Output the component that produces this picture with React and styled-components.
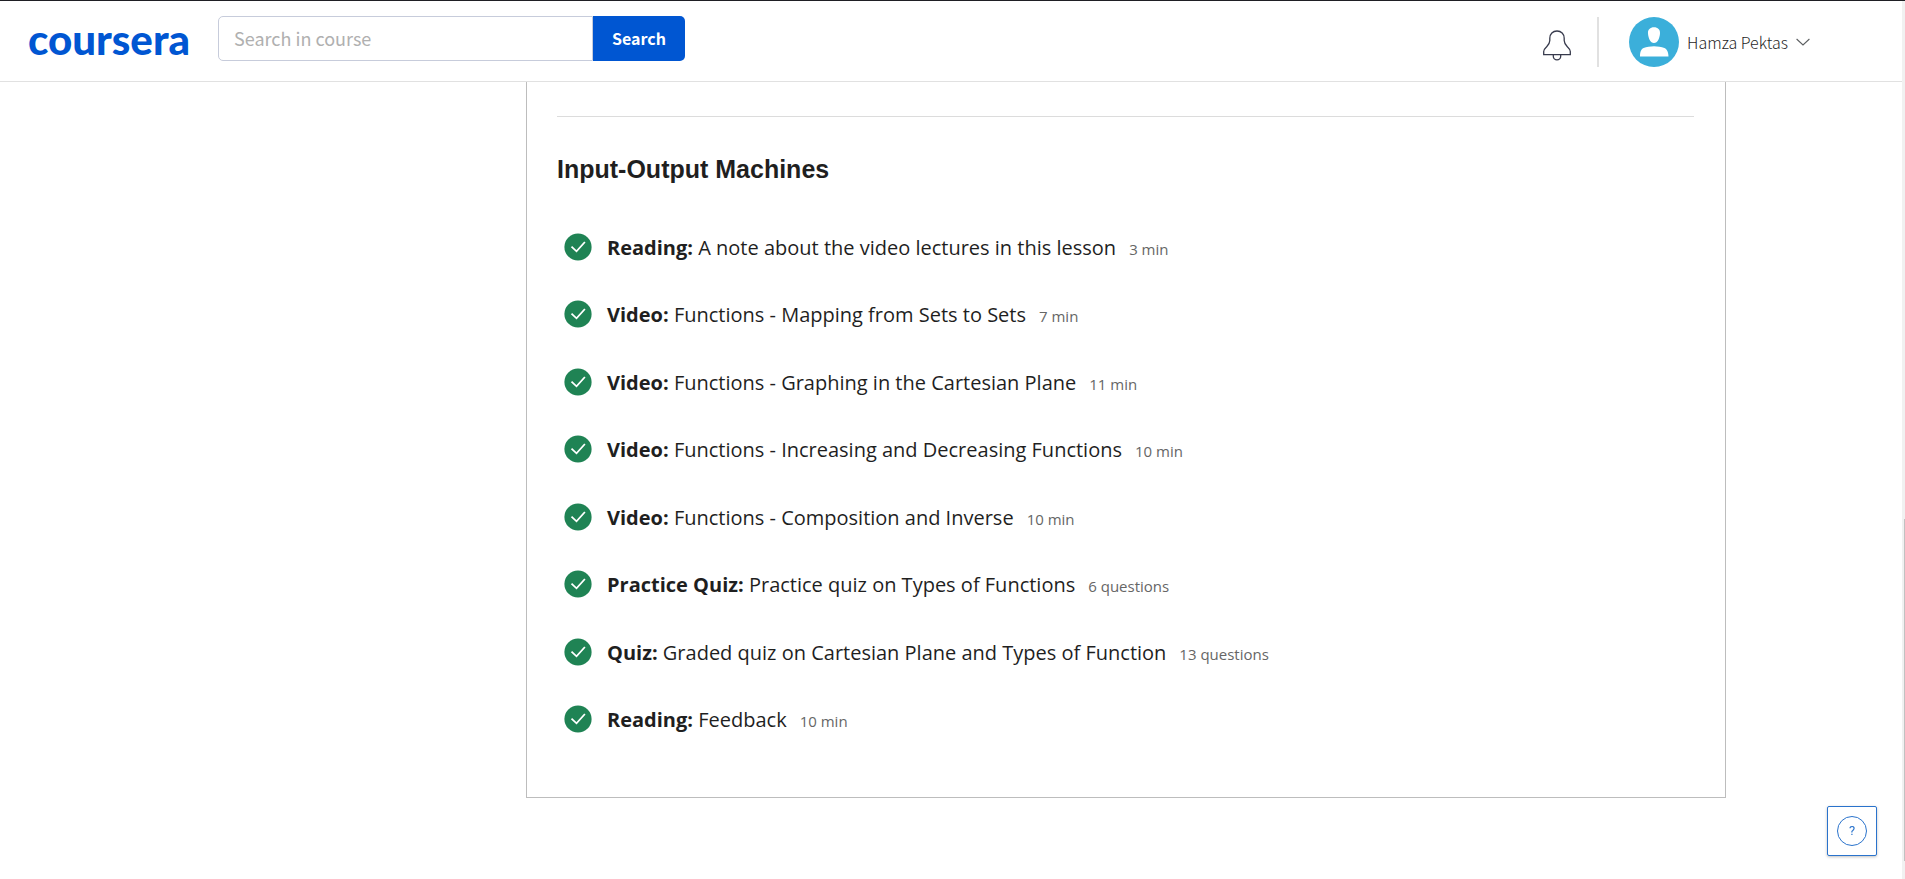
import React from "react";
import styled, { createGlobalStyle } from "styled-components";

const GlobalStyle = createGlobalStyle`
  *, *::before, *::after { box-sizing: border-box; }
  body {
    margin: 0;
    background: #fff;
    color: #1f1f1f;
    font-family: "Open Sans", "Noto Sans", sans-serif;
  }
`;

const uiFont = `"Noto Sans CJK SC", "Open Sans", sans-serif`;

const Header = styled.header`
  display: flex;
  align-items: flex-start;
  height: 82px;
  padding: 0 95px 0 28px;
  border-top: 1px solid #1f1f24;
  border-bottom: 1px solid #e1e1e1;
`;

const Logo = styled.a`
  width: 190px;
  margin-top: 14px;
  color: #0056d2;
  font: 900 42px/48px Lato, sans-serif;
  text-decoration: none;
`;

const SearchForm = styled.form`
  display: flex;
  height: 45px;
  margin-top: 15px;
`;

const SearchInput = styled.input`
  width: 375px;
  padding: 0 15px 2px;
  border: 1px solid #c7ccdb;
  border-radius: 5px 0 0 5px;
  font: 400 18px/26px ${uiFont};
  color: #1f1f1f;
  outline: none;
  &::placeholder { color: #b0b0b0; opacity: 1; }
`;

const SearchButton = styled.button`
  width: 92px;
  padding: 0 0 2px;
  border: 0;
  border-radius: 0 5px 5px 0;
  background: #0056d2;
  color: #fff;
  font: 700 16px/24px ${uiFont};
  cursor: pointer;
`;

const Account = styled.div`
  display: flex;
  align-items: center;
  height: 50px;
  margin: 16px 0 0 auto;
`;

const BellButton = styled.button`
  display: flex;
  padding: 6px 26px 0 0;
  border: 0;
  background: none;
  cursor: pointer;
`;

const ProfileButton = styled.button`
  display: flex;
  align-items: center;
  height: 50px;
  padding: 0 0 0 30px;
  border: 0;
  border-left: 2px solid #e1e1e1;
  background: none;
  color: #1f1f1f;
  font: 300 16px/24px ${uiFont};
  cursor: pointer;
`;

const ProfileName = styled.span`
  margin: 0 8px;
`;

const Main = styled.main`
  padding: 0 179px 80px 526px;
`;

const Card = styled.section`
  padding: 34px 31px 42px 30px;
  border: 1px solid #bdbdbd;
  border-top: 0;
`;

const Divider = styled.hr`
  height: 1px;
  margin: 0 0 37px;
  border: 0;
  background: #dcdcdc;
`;

const Title = styled.h2`
  margin: 0 0 31px;
  font: 700 25px/30px "Liberation Sans", Arial, sans-serif;
`;

const Lessons = styled.ul`
  display: grid;
  grid-auto-rows: 67px 68px;
  margin: 0;
  padding: 0;
  list-style: none;
`;

const LessonLink = styled.a`
  display: flex;
  align-items: center;
  height: 64px;
  padding-left: 7px;
  color: inherit;
  text-decoration: none;
`;

const LessonText = styled.span`
  margin: 2px 13px 0 15px;
  font-size: 20px;
  line-height: 30px;
`;

const Meta = styled.span`
  margin-top: 3px;
  color: #666;
  font-size: 15px;
  line-height: 24px;
`;

const HelpButton = styled.button`
  position: fixed;
  right: 28px;
  bottom: 23px;
  display: grid;
  place-items: center;
  width: 50px;
  height: 50px;
  padding: 0;
  border: 1px solid #2a73cc;
  border-radius: 2px;
  background: #fff;
  box-shadow: 0 1px 3px rgba(0, 0, 0, 0.25);
  cursor: pointer;
`;

const HelpMark = styled.span`
  width: 30px;
  height: 30px;
  border: 1px solid #2a73cc;
  border-radius: 50%;
  color: #2a73cc;
  font: 400 13px/28px Roboto, sans-serif;
  text-align: center;
`;

const ScrollTrack = styled.div`
  position: fixed;
  top: 1px;
  right: 0;
  bottom: 0;
  width: 3px;
  background: #f1f1f1;
`;

const ScrollThumb = styled.div`
  position: absolute;
  top: 59%;
  right: 0;
  width: 1px;
  height: 39%;
  background: #c1c1c1;
`;

const lessons = [
  ["Reading", "A note about the video lectures in this lesson", "3 min"],
  ["Video", "Functions - Mapping from Sets to Sets", "7 min"],
  ["Video", "Functions - Graphing in the Cartesian Plane", "11 min"],
  ["Video", "Functions - Increasing and Decreasing Functions", "10 min"],
  ["Video", "Functions - Composition and Inverse", "10 min"],
  ["Practice Quiz", "Practice quiz on Types of Functions", "6 questions"],
  ["Quiz", "Graded quiz on Cartesian Plane and Types of Function", "13 questions"],
  ["Reading", "Feedback", "10 min"],
];

const BellIcon = () => (
  <svg width="28" height="31" viewBox="0 0 28 31" fill="none" stroke="#373a4c" strokeWidth="1.3" aria-hidden="true">
    <path d="M.7 24.7v-3.2c0-2 1.1-2.900 2.800-4.500C5.800 14.800 6.800 13.400 6.800 10.600V8.200C6.800 4 9.800 1 14 1s7.200 3 7.200 7.200v2.400c0 2.800 1 4.200 3.300 6.400 1.700 1.600 2.800 2.500 2.800 4.500v3.200z" />
    <path d="M10.300 25v1.200a3.700 3.700 0 0 0 7.400 0V25" />
  </svg>
);

const Avatar = () => (
  <svg width="50" height="50" viewBox="0 0 50 50" aria-hidden="true">
    <circle cx="25" cy="25" r="25" fill="#3bafda" />
    <path fill="#fff" d="M25 10.200c3.800 0 6.300 2.300 6 6.200-.3 4.300-2.300 9.600-6 9.600s-5.700-5.300-6-9.600c-.3-3.900 2.200-6.200 6-6.200zM11 39.600c0-3.800.8-7.400 3.600-8.500 3-1.200 6.600-1.900 10.400-1.900s7.400.7 10.400 1.900c2.800 1.100 4.100 4.700 4.100 8.500z" />
  </svg>
);

const ChevronIcon = () => (
  <svg width="14" height="8" viewBox="0 0 14 8" fill="none" stroke="#5c5f61" strokeWidth="1.1" aria-hidden="true">
    <path d="M.6 1 7 7l6.400-6" />
  </svg>
);

const CheckIcon = () => (
  <svg width="28" height="28" viewBox="0 0 28 28" aria-hidden="true">
    <circle cx="14" cy="14" r="13.600" fill="#1f8354" />
    <path d="m7.500 13.600 5 4.700 8.400-9.300" fill="none" stroke="#fff" strokeWidth="1.800" />
  </svg>
);

export default function App() {
  return (
    <>
      <GlobalStyle />
      <Header>
        <Logo href="#">coursera</Logo>
        <SearchForm role="search" onSubmit={(e) => e.preventDefault()}>
          <SearchInput type="text" aria-label="Search in course" placeholder="Search in course" />
          <SearchButton type="submit">Search</SearchButton>
        </SearchForm>
        <Account>
          <BellButton type="button" aria-label="Notifications">
            <BellIcon />
          </BellButton>
          <ProfileButton type="button">
            <Avatar />
            <ProfileName>Hamza Pektas</ProfileName>
            <ChevronIcon />
          </ProfileButton>
        </Account>
      </Header>
      <Main>
        <Card>
          <Divider />
          <Title>Input-Output Machines</Title>
          <Lessons>
            {lessons.map(([kind, name, meta]) => (
              <li key={kind + name}>
                <LessonLink href="#">
                  <CheckIcon />
                  <LessonText>
                    <strong>{kind}:</strong> {name}
                  </LessonText>
                  <Meta>{meta}</Meta>
                </LessonLink>
              </li>
            ))}
          </Lessons>
        </Card>
      </Main>
      <HelpButton type="button" aria-label="Help">
        <HelpMark>?</HelpMark>
      </HelpButton>
      <ScrollTrack>
        <ScrollThumb />
      </ScrollTrack>
    </>
  );
}
